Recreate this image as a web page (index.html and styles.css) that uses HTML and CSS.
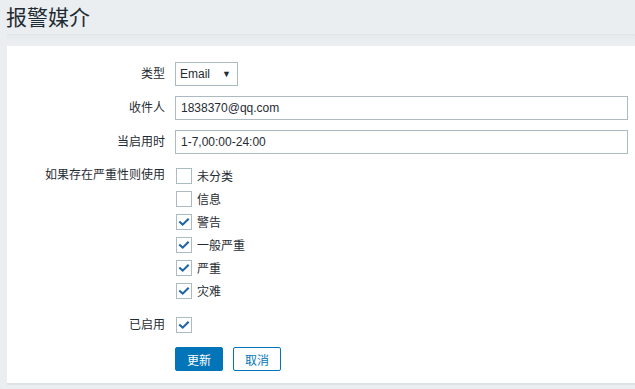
FILE: index.html
```html
<!DOCTYPE html>
<html>
<head>
<meta charset="utf-8">
<link rel="stylesheet" href="styles.css">
</head>
<body>
<div class="header"><h1 class="title">报警媒介</h1></div>
<div class="strip"></div>
<div class="card">
  <div class="form">
    <div class="label">类型</div>
    <div class="field">
      <div class="select"><span>Email</span><span class="arrow">▼</span></div>
    </div>

    <div class="label">收件人</div>
    <div class="field"><div class="input">1838370@qq.com</div></div>

    <div class="label">当启用时</div>
    <div class="field"><div class="input">1-7,00:00-24:00</div></div>

    <div class="label label-top">如果存在严重性则使用</div>
    <div class="field">
      <ul class="checklist">
        <li><span class="cb"></span>未分类</li>
        <li><span class="cb"></span>信息</li>
        <li><span class="cb checked"><svg viewBox="0 0 16 16"><path d="M3.5 8.2 L6.5 11 L12.5 5" /></svg></span>警告</li>
        <li><span class="cb checked"><svg viewBox="0 0 16 16"><path d="M3.5 8.2 L6.5 11 L12.5 5" /></svg></span>一般严重</li>
        <li><span class="cb checked"><svg viewBox="0 0 16 16"><path d="M3.5 8.2 L6.5 11 L12.5 5" /></svg></span>严重</li>
        <li><span class="cb checked"><svg viewBox="0 0 16 16"><path d="M3.5 8.2 L6.5 11 L12.5 5" /></svg></span>灾难</li>
      </ul>
    </div>

    <div class="label label-enabled">已启用</div>
    <div class="field field-enabled"><span class="cb checked"><svg viewBox="0 0 16 16"><path d="M3.5 8.2 L6.5 11 L12.5 5" /></svg></span></div>

    <div></div>
    <div class="field buttons">
      <button class="btn primary">更新</button>
      <button class="btn secondary">取消</button>
    </div>
  </div>
</div>
</body>
</html>
```

FILE: styles.css
```css
* { box-sizing: border-box; }
html, body { margin: 0; padding: 0; }
body {
  background: #ebeef0;
  font-family: Arial, "Liberation Sans", "Noto Sans CJK SC", sans-serif;
  font-size: 12px;
  color: #1f2c33;
  width: 635px;
  height: 389px;
  overflow: hidden;
}
.header {
  height: 34px;
  padding-left: 6px;
  display: flex;
  align-items: center;
}
.title {
  margin: 0;
  font-weight: normal;
  font-size: 21px;
  color: #1f2c33;
  line-height: 1;
}
.strip {
  height: 12px;
  margin-left: 7px;
  border-top: 1px solid #e1e5e8;
  background: linear-gradient(#e6eaed, #edf0f2);
}
.card {
  margin-left: 7px;
  background: #ffffff;
  height: 339px;
  border-bottom: 2px solid #dde3e6;
  padding: 16px 7px 0 0;
}
.form {
  display: grid;
  grid-template-columns: 158px 1fr;
  column-gap: 10px;
  row-gap: 10px;
  align-items: center;
}
.label {
  text-align: right;
  line-height: 24px;
}
.label-top { align-self: start; line-height: 18px; margin-top: 2px; }
.field { display: flex; align-items: center; }
.select {
  width: 63px;
  height: 24px;
  border: 1px solid #acbbc2;
  display: flex;
  align-items: center;
  justify-content: space-between;
  padding: 0 6px 0 4px;
  font-size: 12px;
}
.arrow { font-size: 9px; }
.input {
  width: 100%;
  height: 24px;
  border: 1px solid #acbbc2;
  padding: 0 5px;
  line-height: 22px;
}
.checklist {
  list-style: none;
  margin: 0;
  padding: 0;
}
.checklist li {
  display: flex;
  align-items: center;
  height: 23px;
}
.cb {
  display: inline-block;
  width: 16px;
  height: 16px;
  border: 1px solid #acbbc2;
  background: #fff;
  margin-right: 5px;
  margin-left: 1px;
  position: relative;
}
.cb svg {
  position: absolute;
  left: 0;
  top: 0;
  width: 14px;
  height: 14px;
}
.cb svg path {
  fill: none;
  stroke: #1f65a4;
  stroke-width: 2.4;
  stroke-linecap: square;
}
.label-enabled { margin-top: 1px; }
.field-enabled { margin-top: 1px; }
.buttons { gap: 10px; margin-top: 0; }
.btn {
  height: 24px;
  width: 48px;
  font-family: Arial, "Liberation Sans", "Noto Sans CJK SC", sans-serif;
  font-size: 12px;
  border-radius: 2px;
  padding: 0;
  cursor: pointer;
}
.primary {
  background: #0275b8;
  border: 1px solid #0275b8;
  color: #fff;
}
.secondary {
  background: #fff;
  border: 1px solid #0275b8;
  color: #0275b8;
}
```
